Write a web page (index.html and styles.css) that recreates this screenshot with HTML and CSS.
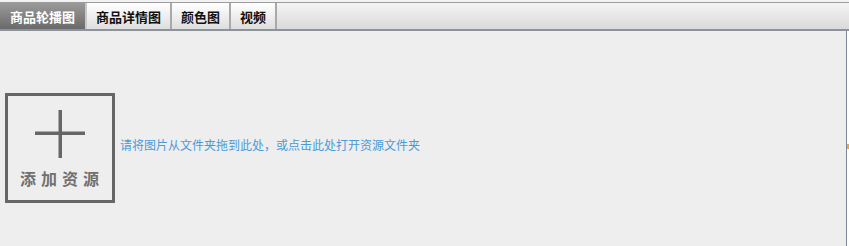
FILE: index.html
```html
<!DOCTYPE html>
<html lang="zh">
<head>
<meta charset="utf-8">
<title>资源</title>
<link rel="stylesheet" href="styles.css">
</head>
<body>
<div class="topgap"></div>
<div class="tabbar">
  <div class="tab active">商品轮播图</div>
  <div class="tab">商品详情图</div>
  <div class="tab">颜色图</div>
  <div class="tab">视频</div>
  <div class="tabrest"></div>
</div>
<div class="main">
  <div class="panel">
    <div class="drop">
      <div class="addbox">
        <svg class="plus" width="104" height="70" viewBox="0 0 104 70">
          <rect x="27" y="35.5" width="50" height="3.5" fill="#666"/>
          <rect x="50.5" y="14" width="3.5" height="48" fill="#666"/>
        </svg>
        <div class="addlabel">添加资源</div>
      </div>
      <div class="hint">请将图片从文件夹拖到此处，或点击此处打开资源文件夹</div>
    </div>
  </div>
  <div class="gutter"><span class="mark"></span></div>
</div>
</body>
</html>
```
FILE: styles.css
```css
html, body {
  margin: 0;
  padding: 0;
  height: 100%;
}
body {
  background: #efeeee;
  font-family: "Noto Sans CJK SC", "Noto Sans", sans-serif;
  display: flex;
  flex-direction: column;
  overflow: hidden;
}
.topgap {
  height: 2px;
  background: #f2f2f2;
}
.tabbar {
  display: flex;
  height: 26px;
  border-top: 1px solid #9c9c9c;
  border-bottom: 2px solid #8e939a;
  background: linear-gradient(#f4f4f4, #dadada);
}
.tab {
  display: flex;
  align-items: center;
  padding: 0 9px;
  font-size: 13px;
  font-weight: bold;
  color: #111;
  background: linear-gradient(#ffffff, #dedede);
  border-right: 2px solid #a9a9a9;
  line-height: 1;
}
.tab.active {
  color: #fff;
  background: linear-gradient(#9a9a9a, #6a6a6a);
  padding: 0 10px;
  border-right: 2px solid #c8c8c8;
}
.tabrest {
  flex: 1;
}
.main {
  flex: 1;
  display: flex;
}
.panel {
  flex: 1;
  border-right: 1px solid #7d8898;
  padding: 62px 0 0 5px;
}
.gutter {
  width: 2px;
  background: #ffffff;
  padding-top: 113px;
}
.mark {
  display: block;
  width: 2px;
  height: 5px;
  background: #e8a84a;
}
.drop {
  display: flex;
  align-items: center;
}
.addbox {
  box-sizing: border-box;
  width: 110px;
  height: 110px;
  border: 3px solid #666666;
}
.plus {
  display: block;
}
.addlabel {
  margin-top: 3px;
  padding-left: 12px;
  font-size: 16px;
  font-weight: bold;
  line-height: 18px;
  letter-spacing: 5px;
  color: #707070;
  white-space: nowrap;
}
.hint {
  margin-left: 5px;
  margin-bottom: 8px;
  font-size: 12px;
  color: #4a9ad8;
  white-space: nowrap;
}
```
